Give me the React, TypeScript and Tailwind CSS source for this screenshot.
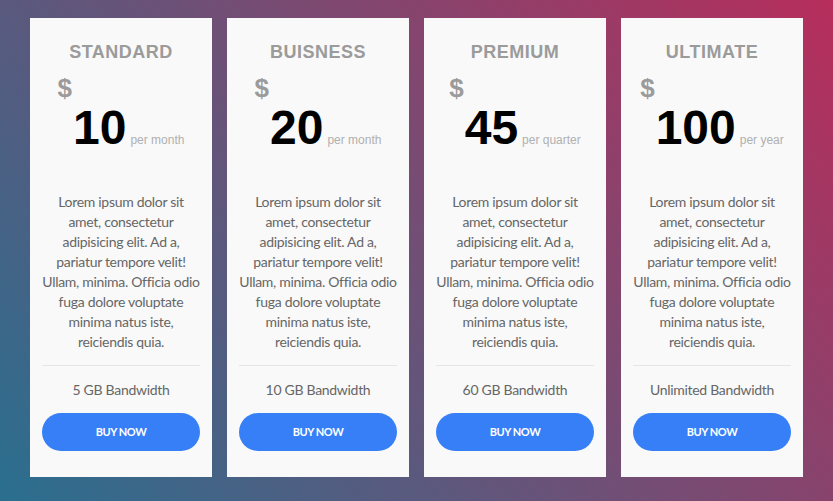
import React from 'react';

type Plan = {
  name: string;
  price: string;
  period: string;
  bandwidth: string;
};

const plans: Plan[] = [
  { name: 'STANDARD', price: '10', period: 'per month', bandwidth: '5 GB Bandwidth' },
  { name: 'BUISNESS', price: '20', period: 'per month', bandwidth: '10 GB Bandwidth' },
  { name: 'PREMIUM', price: '45', period: 'per quarter', bandwidth: '60 GB Bandwidth' },
  { name: 'ULTIMATE', price: '100', period: 'per year', bandwidth: 'Unlimited Bandwidth' },
];

const lorem =
  'Lorem ipsum dolor sit amet, consectetur adipisicing elit. Ad a, pariatur tempore velit! Ullam, minima. Officia odio fuga dolore voluptate minima natus iste, reiciendis quia.';

function PriceCard({ plan }: { plan: Plan }) {
  return (
    <div className="w-[182px] bg-[#f9f9f9] px-3 pt-[22px] pb-[26px] flex flex-col">
      {/* --- TITLE --- */}
      <h2 className="text-center font-['Liberation_Sans',Arial,sans-serif] text-[18px] leading-[24px] font-bold tracking-[0.5px] text-[#9b9b9b]">
        {plan.name}
      </h2>

      {/* --- PRICE --- */}
      <div className="mt-[11px] text-center leading-none font-['Liberation_Sans',Arial,sans-serif]">
        <span className="text-[26px] font-bold text-[#9b9b9b] align-[47px]">$</span>
        <span className="ml-[1px] text-[48px] font-bold text-black">{plan.price}</span>
        <span className="ml-[4px] text-[12px] text-[#b0b0b0]">{plan.period}</span>
      </div>

      {/* --- DESCRIPTION --- */}
      <p className="mt-[40px] text-center font-['Lato',sans-serif] text-[14px] leading-[20px] tracking-[-0.3px] text-[#666]">
        {lorem}
      </p>

      <div className="mt-[13px] h-px bg-[#e6e6e6]" />

      <p className="mt-[14px] text-center font-['Lato',sans-serif] text-[14px] leading-[20px] tracking-[-0.3px] text-[#666]">
        {plan.bandwidth}
      </p>

      <button className="mt-[13px] h-[38px] w-full rounded-full bg-[#377ff7] text-white font-['Lato',sans-serif] text-[11px] font-bold tracking-[-0.4px]">
        BUY NOW
      </button>
    </div>
  );
}

export default function App() {
  return (
    <div className="h-screen w-full bg-[linear-gradient(50deg,#2a6f8f,#b72e5c)] px-[30px] pt-[18px]">
      <div className="flex items-start gap-[15px]">
        {plans.map((plan) => (
          <PriceCard key={plan.name} plan={plan} />
        ))}
      </div>
    </div>
  );
}
